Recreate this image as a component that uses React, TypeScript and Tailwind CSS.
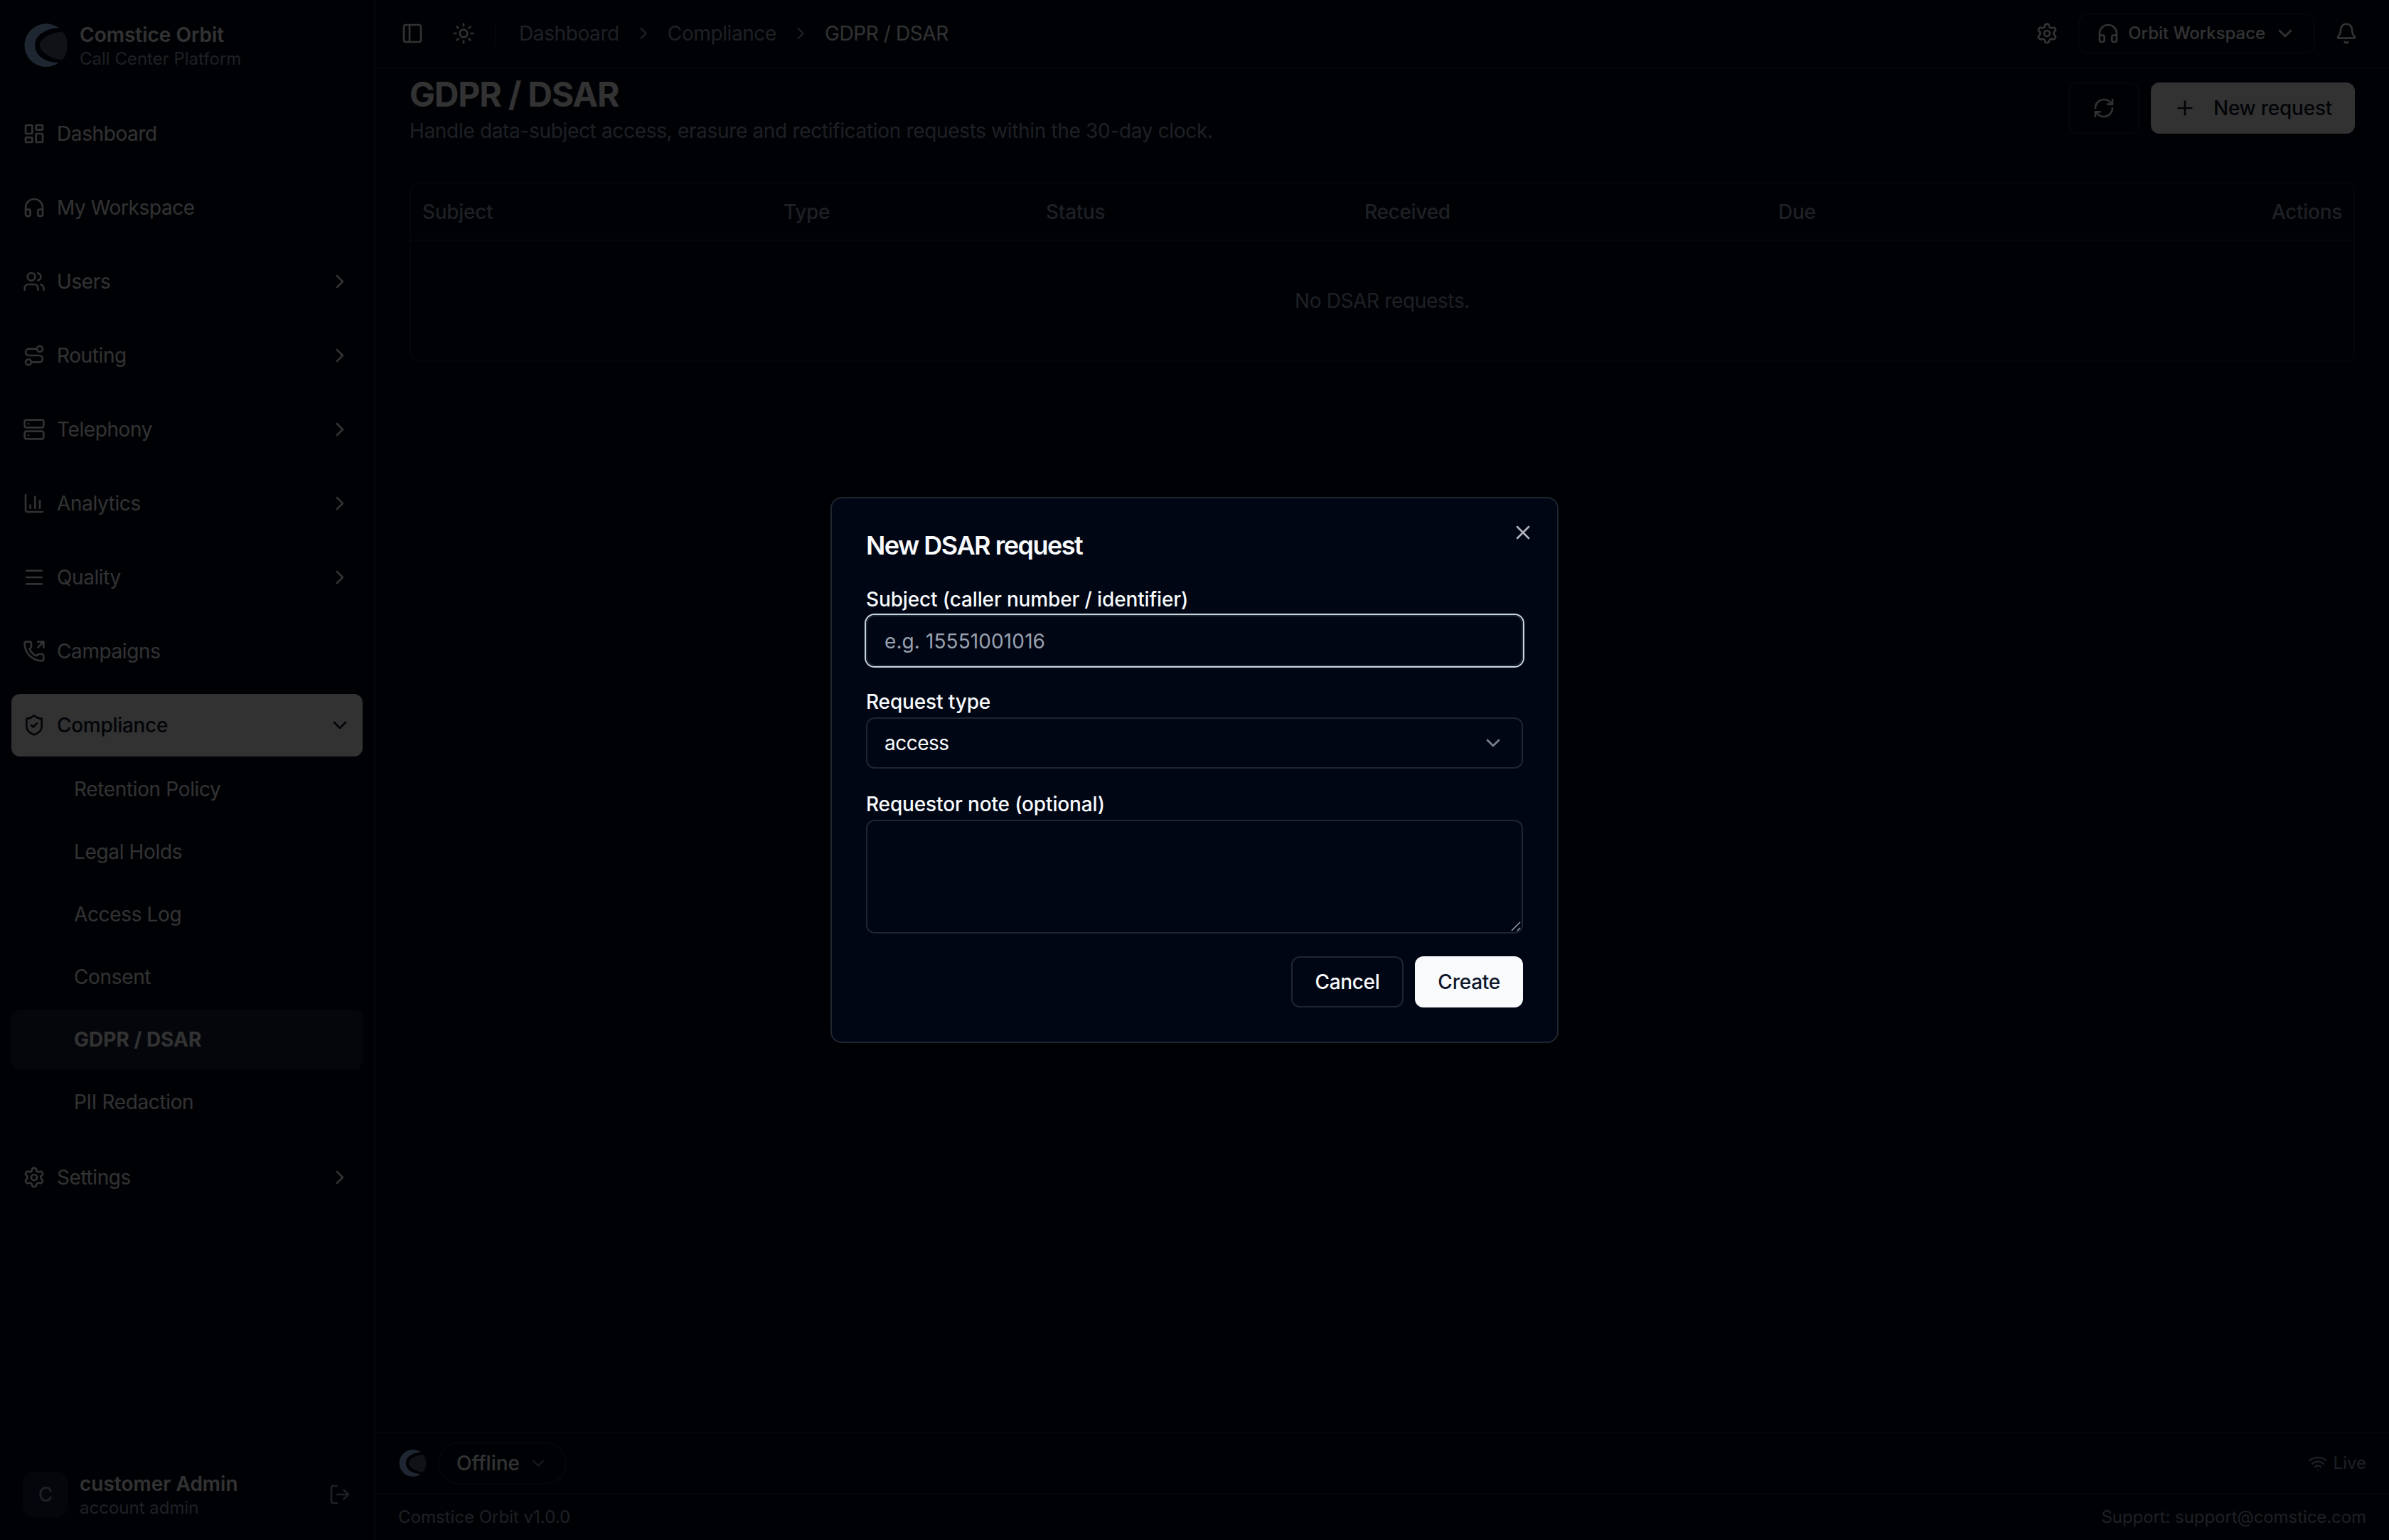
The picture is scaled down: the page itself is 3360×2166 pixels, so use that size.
// ============================================================
// GDPR / DSAR PAGE
// ------------------------------------------------------------
// Compliance screen of the Orbit console: sidebar, top bar,
// requests table, status footer and the "New DSAR request" dialog.
// ============================================================

import type { ReactNode } from "react";
import {
  Bell,
  ChartColumn,
  ChevronDown,
  ChevronRight,
  Headphones,
  LayoutDashboard,
  LogOut,
  Menu,
  PanelLeft,
  PhoneOutgoing,
  Plus,
  RefreshCw,
  Route,
  Server,
  Settings,
  ShieldCheck,
  Sun,
  Users,
  Wifi,
  X,
  type LucideIcon,
} from "lucide-react";

type NavEntry = {
  label: string;
  icon: LucideIcon;
  expandable?: boolean;
};

const NAV: NavEntry[] = [
  { label: "Dashboard", icon: LayoutDashboard },
  { label: "My Workspace", icon: Headphones },
  { label: "Users", icon: Users, expandable: true },
  { label: "Routing", icon: Route, expandable: true },
  { label: "Telephony", icon: Server, expandable: true },
  { label: "Analytics", icon: ChartColumn, expandable: true },
  { label: "Quality", icon: Menu, expandable: true },
  { label: "Campaigns", icon: PhoneOutgoing },
];

const COMPLIANCE_PAGES = [
  "Retention Policy",
  "Legal Holds",
  "Access Log",
  "Consent",
  "GDPR / DSAR",
  "PII Redaction",
];

const ACTIVE_PAGE = "GDPR / DSAR";

function Logo({ className }: { className: string }) {
  return (
    <svg viewBox="0 0 64 64" className={className}>
      <path
        d="M51 7.3A30.4 30.4 0 1 0 50.7 56.3C31 55.5 17.2 46 17.2 32C17.2 17.5 32 8 51 7.3Z"
        fill="#94c4f4"
      />
      <path
        d="M56.5 12.8C38 13.5 23.7 23 23.7 31.5C23.7 41 40 51.5 56 52C60.5 46.500 62.8 40 62.8 32C62.8 24.5 60.5 17.5 56.5 12.8Z"
        fill="#50597a"
      />
    </svg>
  );
}

function NavItem({ label, icon: Icon, expandable }: NavEntry) {
  return (
    <div className="flex h-[88px] items-center gap-4 rounded-xl px-4 text-[28px] tracking-[-0.4px]">
      <Icon className="size-8" />
      <span className="flex-1">{label}</span>
      {expandable && <ChevronRight className="size-8" />}
    </div>
  );
}

function Sidebar() {
  return (
    <aside className="flex w-[528px] shrink-0 flex-col border-r-2 border-[#1e293b]">
      {/* Brand */}
      <div className="flex h-24 items-center gap-4 px-8 pt-8">
        <Logo className="size-16" />
        <div className="pt-0.5">
          <p className="text-[28px] leading-[35px] font-semibold">Comstice Orbit</p>
          <p className="text-[24px] leading-[32px] text-slate-400">Call Center Platform</p>
        </div>
      </div>

      {/* Navigation */}
      <nav className="mt-12 flex flex-1 flex-col gap-4 px-4">
        {NAV.map((entry) => (
          <NavItem key={entry.label} {...entry} />
        ))}

        <div className="flex flex-col gap-1">
          <div className="flex h-[88px] items-center gap-4 rounded-xl bg-slate-50 px-4 text-[28px] font-medium tracking-[-0.3px] text-[#0f172a]">
            <ShieldCheck className="size-8" />
            <span className="flex-1">Compliance</span>
            <ChevronDown className="size-8" />
          </div>
          {COMPLIANCE_PAGES.map((page) =>
            page === ACTIVE_PAGE ? (
              <div
                key={page}
                className="flex h-[84px] items-center rounded-xl bg-[#191e3a] pl-[88px] text-[28px] font-bold"
              >
                {page}
              </div>
            ) : (
              <div
                key={page}
                className="flex h-[84px] items-center pl-[88px] text-[28px] tracking-[-0.35px]"
              >
                {page}
              </div>
            ),
          )}
        </div>

        <div className="pt-1">
          <NavItem label="Settings" icon={Settings} expandable />
        </div>
      </nav>

      {/* Signed-in user */}
      <div className="flex h-32 items-center gap-4 px-8">
        <div className="flex size-16 items-center justify-center rounded-2xl bg-[#191e3a] text-[28px] font-medium text-slate-400">
          C
        </div>
        <div className="flex-1 pt-0.5">
          <p className="text-[28px] leading-[35px] font-semibold">customer Admin</p>
          <p className="text-[24px] leading-[32px] text-slate-400">account admin</p>
        </div>
        <LogOut className="size-8 text-slate-400" />
      </div>
    </aside>
  );
}

function TopBar() {
  return (
    <header className="flex h-24 shrink-0 items-center border-b-2 border-[#191e3a] pr-11 pl-9">
      <PanelLeft className="size-8" />
      <Sun className="ml-10 size-8" />
      <div className="ml-7 h-8 w-0.5 bg-[#191e3a]" />
      <nav className="ml-8 flex items-center gap-5 text-[28px] tracking-[-0.4px] text-slate-400">
        <span>Dashboard</span>
        <ChevronRight className="size-7" />
        <span>Compliance</span>
        <ChevronRight className="size-7" />
        <span className="text-slate-50">GDPR / DSAR</span>
      </nav>

      <div className="ml-auto flex items-center gap-7">
        <Settings className="size-8" />
        <div className="flex h-14 items-center rounded-xl border-2 border-[#191e3a] px-6">
          <Headphones className="size-8" />
          <span className="ml-3 text-[24px] font-medium tracking-[-0.05px]">Orbit Workspace</span>
          <ChevronDown className="ml-3 size-8" />
        </div>
        <Bell className="size-8" />
      </div>
    </header>
  );
}

function RequestsTable() {
  return (
    <div className="mt-[52px] rounded-xl border-2 border-[#191e3a]">
      <div className="grid h-[81px] grid-cols-[508px_369px_448px_582px_1fr_1fr] items-center border-b-2 border-[#191e3a] text-[28px] font-medium tracking-[-0.3px] text-slate-400 [&>span]:px-4">
        <span>Subject</span>
        <span>Type</span>
        <span>Status</span>
        <span>Received</span>
        <span>Due</span>
        <span className="text-right">Actions</span>
      </div>
      <div className="flex h-[168px] items-center justify-center text-[28px] tracking-[-0.35px] text-slate-400">
        No DSAR requests.
      </div>
    </div>
  );
}

function Footer() {
  return (
    <footer className="shrink-0 text-[24px] text-slate-400">
      <div className="flex h-[86px] items-center border-t-2 border-[#191e3a] px-8">
        <Logo className="size-10" />
        <div className="ml-4 flex h-[60px] items-center gap-3 rounded-full border-2 border-[#191e3a] px-6">
          <span className="text-[28px] font-medium text-slate-50">Offline</span>
          <ChevronDown className="size-7 opacity-80" />
        </div>
        <div className="ml-auto flex items-center gap-2">
          <Wifi className="size-7" />
          <span>Live</span>
        </div>
      </div>
      <div className="flex h-[66px] items-center justify-between border-t-2 border-[#191e3a] px-8">
        <span>Comstice Orbit v1.0.0</span>
        <span className="tracking-[-0.07px]">Support: support@comstice.com</span>
      </div>
    </footer>
  );
}

function Field({ label, children }: { label: string; children: ReactNode }) {
  return (
    <div>
      <p className="h-12 pt-1 text-[28px] leading-[45px] font-medium tracking-[-0.14px]">{label}</p>
      {children}
    </div>
  );
}

function NewRequestDialog() {
  return (
    <div className="absolute inset-0 flex items-center justify-center bg-black/80">
      <div className="relative h-[768px] w-[1024px] rounded-2xl border-2 border-[#1e2630] bg-[#000614] p-12">
        <X className="absolute top-8 right-8 size-8 opacity-70" />
        <h2 className="text-[36px] leading-none font-semibold tracking-[-1.5px]">
          New DSAR request
        </h2>

        <div className="mt-8 flex flex-col gap-6">
          <Field label="Subject (caller number / identifier)">
            <div className="flex h-[72px] items-center rounded-xl border-2 border-[#1e2630] px-6 pt-px text-[28px] tracking-[0.1px] text-gray-400 ring-2 ring-slate-300">
              e.g. 15551001016
            </div>
          </Field>
          <Field label="Request type">
            <div className="flex h-[72px] items-center justify-between rounded-xl border-2 border-[#1e2630] px-6 text-[28px] tracking-[-0.5px]">
              access
              <ChevronDown className="size-8 opacity-50" />
            </div>
          </Field>
          <Field label="Requestor note (optional)">
            <div className="relative h-[160px] rounded-xl border-2 border-[#1e2630]">
              {/* Resize grip */}
              <svg
                viewBox="0 0 16 16"
                className="absolute right-0 bottom-0 size-4 stroke-gray-400"
                fill="none"
                strokeWidth="1.5"
              >
                <path d="M2 14L14 2M10 14L14 10" />
              </svg>
            </div>
          </Field>
        </div>

        <div className="mt-8 flex justify-end gap-4 text-[28px] font-medium tracking-[-0.25px]">
          <button className="h-[72px] rounded-xl border-2 border-[#1e2630] px-8 tracking-[-0.35px]">
            Cancel
          </button>
          <button className="h-[72px] rounded-xl bg-slate-50 px-8 text-[#0f172a]">Create</button>
        </div>
      </div>
    </div>
  );
}

export default function App() {
  return (
    <div className="relative flex h-[2166px] w-[3360px] overflow-hidden bg-[#000614] font-['Inter',sans-serif] text-slate-50">
      <Sidebar />

      <div className="flex min-w-0 flex-1 flex-col">
        <TopBar />
        <main className="flex-1 px-12 pt-1">
          {/* Page heading */}
          <div className="flex items-center gap-4">
            <div className="flex-1">
              <h1 className="h-16 text-[48px] leading-[66px] font-bold tracking-tight">
                GDPR / DSAR
              </h1>
              <p className="text-[28px] leading-[40px] tracking-[-0.33px] text-slate-400">
                Handle data-subject access, erasure and rectification requests within the 30-day clock.
              </p>
            </div>
            <button className="flex h-[72px] w-[100px] items-center justify-center rounded-xl border-2 border-[#191e3a]">
              <RefreshCw className="size-8" />
            </button>
            <button className="flex h-[72px] items-center gap-6 rounded-xl bg-slate-50 px-8 text-[28px] font-medium tracking-[-0.25px] text-[#0f172a]">
              <Plus className="size-8" />
              New request
            </button>
          </div>

          <RequestsTable />
        </main>
        <Footer />
      </div>

      <NewRequestDialog />
    </div>
  );
}
